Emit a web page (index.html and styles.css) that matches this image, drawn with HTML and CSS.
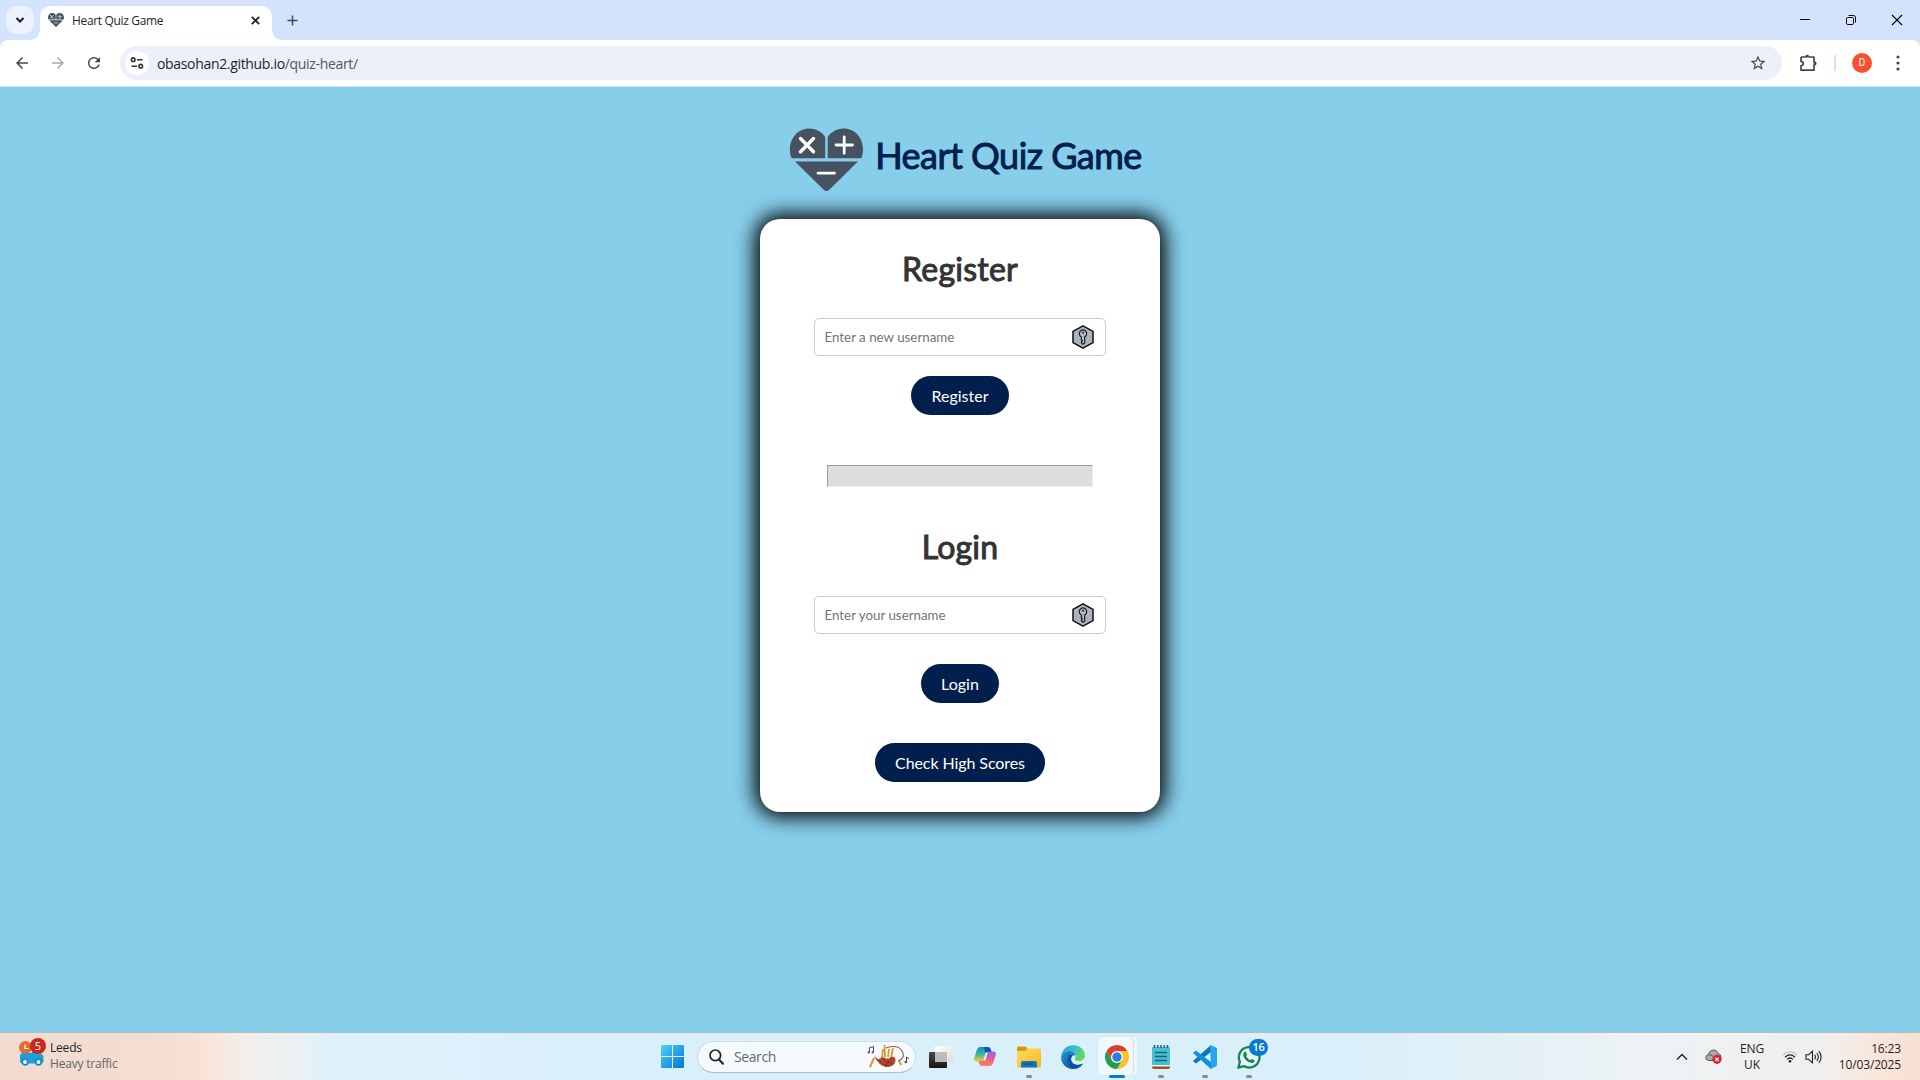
FILE: index.html
```html
<!DOCTYPE html>
<html lang="en">
<head>
<meta charset="utf-8">
<title>Heart Quiz Game</title>
<link rel="stylesheet" href="styles.css">
</head>
<body>
<svg class="defs" aria-hidden="true">
  <defs>
    <symbol id="heart" viewBox="0 0 73 64">
      <path d="M36 30.2H1.6A18.6 18.6 0 0 1 0 21C0 9.500 8.500.5 19 .5c7 0 12.500 3 16.200 8.500V30.200zM37.700 30.200V9C41.400 3.500 47 .5 54 .5 64.500.5 73 9.500 73 21c0 3.500-.5 6.300-1.600 9.200zM5 33.500h63L39 62a4 4 0 0 1-5 0z" fill="#46525f"/>
      <path d="M10.500 10.500l13 13.200m0-13.200l-13 13.200" stroke="#fff" stroke-width="3.400" stroke-linecap="round"/>
      <path d="M46 17h16.500M54.200 8.800v16.500M28 45.200h16.500" stroke="#fff" stroke-width="2.800" stroke-linecap="round"/>
    </symbol>
    <symbol id="key" viewBox="0 0 22 24">
      <path d="M11 .8l10 5.600v11.200l-10 5.600-10-5.600V6.400z" fill="#adb3bd" stroke="#111" stroke-width="1.500" stroke-linejoin="round"/>
      <path d="M9.300 11.900a3.700 3.700 0 1 1 3.400 0v6l-1.700 1.300-1.500-1.300v-1.400l.9-.8-1.100-1z" fill="#b4bac3" stroke="#111" stroke-width="1.100"/>
      <circle cx="11" cy="7.700" r=".8" fill="none" stroke="#111" stroke-width=".8"/>
    </symbol>
  </defs>
</svg>

<div class="screen">
  <header class="browser">
    <div class="tabstrip">
      <div class="tab-search"><svg width="10" height="6" viewBox="0 0 10 6"><path d="M1.500 1l3.500 3.500L8.500 1" fill="none" stroke="#1f1f1f" stroke-width="2"/></svg></div>
      <div class="tab">
        <svg width="16" height="14"><use href="#heart"/></svg>
        <span class="tab-title">Heart Quiz Game</span>
        <svg width="9" height="9" viewBox="0 0 9 9"><path d="M.8.8l7.400 7.400M8.200.8L.8 8.200" stroke="#1f1f1f" stroke-width="1.700"/></svg>
      </div>
      <svg class="new-tab" width="11" height="11" viewBox="0 0 11 11"><path d="M5.500.5v10M.5 5.500h10" stroke="#474747" stroke-width="1.500"/></svg>
      <div class="window-controls">
        <svg width="12" height="12" viewBox="0 0 12 12"><path d="M1 5.500h10" stroke="#000"/></svg>
        <svg width="12" height="12" viewBox="0 0 12 12" fill="none" stroke="#000"><rect x="1.500" y="3.500" width="7" height="7" rx="1.200"/><path d="M3.500 1.500h5a2 2 0 0 1 2 2v5"/></svg>
        <svg width="12" height="12" viewBox="0 0 12 12"><path d="M1 1l10 10M11 1L1 11" stroke="#000" stroke-width="1.100"/></svg>
      </div>
    </div>
    <div class="toolbar">
      <div class="nav">
        <svg width="18" height="18" viewBox="0 0 24 24"><path d="M20 11H7.830l5.590-5.590L12 4l-8 8 8 8 1.410-1.410L7.830 13H20v-2z" fill="#474747"/></svg>
        <svg width="18" height="18" viewBox="0 0 24 24"><path d="M12 4l-1.410 1.410L16.170 11H4v2h12.170l-5.580 5.590L12 20l8-8z" fill="#a9a9a9"/></svg>
        <svg width="18" height="18" viewBox="0 0 24 24"><path d="M17.650 6.350A7.960 7.960 0 0 0 12 4a8 8 0 1 0 7.730 10h-2.080A6 6 0 1 1 12 6c1.660 0 3.140.69 4.220 1.780L13 11h7V4z" fill="#474747"/></svg>
      </div>
      <div class="omnibox">
        <div class="site-info"><svg width="14" height="14" viewBox="0 0 14 14" fill="none" stroke="#333" stroke-width="1.600"><circle cx="3.200" cy="3.700" r="1.800"/><path d="M7 3.700h5.500M1.500 10.200H7"/><circle cx="10.700" cy="10.200" r="1.800"/></svg></div>
        <span class="url">obasohan2.github.io<span class="path">/quiz-heart/</span></span>
        <svg class="star" width="18" height="18" viewBox="0 0 24 24"><path d="M22 9.240l-7.190-.62L12 2 9.190 8.630 2 9.240l5.460 4.730L5.820 21 12 17.270 18.180 21l-1.630-7.030L22 9.240zM12 15.400l-3.760 2.270 1-4.280-3.320-2.880 4.380-.38L12 6.100l1.710 4.040 4.380.38-3.320 2.880 1 4.280L12 15.400z" fill="#474747"/></svg>
      </div>
      <svg class="extensions" width="18" height="18" viewBox="0 0 18 18"><path d="M2 3h4.500M10 3h5v5m0 3v5.200H2v-4.400q2.300-.3 2.300-2.200T2 7.400V3" fill="none" stroke="#474747" stroke-width="1.700" stroke-linejoin="round"/><path d="M6 3.500q0-2.700 2.200-2.700t2.200 2.700zM14.500 7.300q3 0 3 2.200t-3 2.200z" fill="#474747"/></svg>
      <span class="divider"></span>
      <span class="avatar">D</span>
      <svg class="menu" width="4" height="16" viewBox="0 0 4 16" fill="#474747"><circle cx="2" cy="2" r="1.600"/><circle cx="2" cy="8" r="1.600"/><circle cx="2" cy="14" r="1.600"/></svg>
    </div>
  </header>

  <main class="page">
    <div class="brand">
      <svg width="73" height="64"><use href="#heart"/></svg>
      <h1>Heart Quiz Game</h1>
    </div>
    <section class="card">
      <h2>Register</h2>
      <div class="field"><input type="text" placeholder="Enter a new username"><svg width="22" height="24"><use href="#key"/></svg></div>
      <button class="btn register">Register</button>
      <hr>
      <h2>Login</h2>
      <div class="field"><input type="text" placeholder="Enter your username"><svg width="22" height="24"><use href="#key"/></svg></div>
      <button class="btn login">Login</button>
      <button class="btn scores">Check High Scores</button>
    </section>
  </main>

  <footer class="taskbar">
    <div class="widget">
      <div class="traffic">
        <svg width="27" height="30" viewBox="0 0 27 30">
          <circle cx="6.500" cy="10.500" r="6.500" fill="#ea6a2a"/><path d="M6 7.500v4h3.500" stroke="#fff" stroke-width="1.200" fill="none"/>
          <path d="M1 18q.5-2 3-2h8l2-2h5l3 3q2.500.5 2.500 3v4q0 2-2 2.500H3Q1 26 1 24z" fill="#1f9ed8"/><circle cx="6" cy="25" r="2.800" fill="#fff" stroke="#1589c8" stroke-width="1.800"/><circle cx="19.500" cy="25" r="2.800" fill="#fff" stroke="#1589c8" stroke-width="1.800"/>
        </svg>
        <span class="count">5</span>
      </div>
      <div class="widget-text"><span>Leeds</span><span class="muted">Heavy traffic</span></div>
    </div>

    <div class="apps">
      <div class="app">
        <svg width="23" height="23" viewBox="0 0 23 23"><defs><linearGradient id="win" x1="0" y1="0" x2="1" y2="1" gradientUnits="objectBoundingBox"><stop offset="0" stop-color="#4fd0fb"/><stop offset="1" stop-color="#0573d0"/></linearGradient></defs><path d="M1 0h10v11H0V1zM12 0h10l1 1v10H12zM0 12h11v11H1l-1-1zM12 12h11v10l-1 1H12z" fill="url(#win)"/></svg>
      </div>
      <div class="search">
        <svg width="15" height="16" viewBox="0 0 15 16"><circle cx="6.300" cy="6.300" r="5.300" fill="none" stroke="#222" stroke-width="1.700"/><path d="M10 10.500l4 4.200" stroke="#222" stroke-width="2" stroke-linecap="round"/></svg>
        <span>Search</span>
        <svg class="pipes" width="43" height="25" viewBox="0 0 43 25">
          <g fill="none" stroke="#4b4560" stroke-width="1"><path d="M2.500 8V3.500l4-.8V8"/><path d="M39.500 18v-5l2.500 2"/></g>
          <g fill="#4b4560"><circle cx="1.700" cy="8.300" r="1.100"/><circle cx="5.700" cy="8.300" r="1.100"/><circle cx="38.800" cy="18" r="1.300"/></g>
          <path d="M15 14L16 5M18 13L17.500 1M21 13l1-8M24 14l2-10" stroke="#d99a26" stroke-width="1.800"/>
          <path d="M19 4q12-4 16 3t-4 10" fill="none" stroke="#a45540" stroke-width="1.100"/>
          <path d="M7 12q2 1 4 3.500l5-2.500q5 3 8 0 5-1 4.500 4-1 6-9.500 6Q12 22 7 12z" fill="#b8482c"/>
          <path d="M10 15q5 6 12 7M16 14q2 5 10 5M26 14q-5 3-8 8" stroke="#702817" stroke-width=".8" fill="none"/>
          <path d="M7 14l-4 9M32 17l2 4" stroke="#d99a26" stroke-width="2"/>
        </svg>
      </div>
      <div class="app view">
        <svg width="24" height="22" viewBox="0 0 24 22"><defs><linearGradient id="dk" x2="0" y2="1"><stop stop-color="#4a4a4a"/><stop offset="1" stop-color="#161616"/></linearGradient><linearGradient id="lt" x2="1" y2="1"><stop stop-color="#fff"/><stop offset="1" stop-color="#dcdcdc"/></linearGradient></defs><rect y="6" width="18" height="16" rx="1" fill="url(#dk)"/><rect x="6" width="18" height="16" rx="1" fill="url(#lt)"/><path d="M6 6h12v10H6z" fill="#bcbcbc"/></svg>
      </div>
      <div class="app">
        <svg width="22" height="21" viewBox="0 0 22 21"><defs><linearGradient id="ca" x2="0" y2="1"><stop stop-color="#1689d8"/><stop offset=".45" stop-color="#31b5a5"/><stop offset="1" stop-color="#f7cf2c"/></linearGradient><linearGradient id="cb" x2="0" y2="1"><stop stop-color="#9c62e6"/><stop offset=".5" stop-color="#e75a9d"/><stop offset="1" stop-color="#fb8450"/></linearGradient></defs><path d="M6 1h8q2 0 2.800 2.500L17.500 6H14q-2 0-2.600 2L9.800 13.500Q9.200 15.500 7 15.500H3Q-.5 15.500.2 12L2.800 4Q3.800 1 6 1z" fill="url(#ca)"/><path d="M16 20H8q-2 0-2.800-2.500L4.500 15H8q2 0 2.600-2L12.200 7.500Q12.800 5.500 15 5.500h4q3.500 0 2.800 3.500L19.200 17Q18.200 20 16 20z" fill="url(#cb)"/><path d="M10 1h4q2 0 2.800 2.500l.7 2.300H14q-2 0-2.600 2z" fill="#174fc4"/><path d="M9.700 14.500l2.200-8h1.800l-2.300 8z" fill="#eaf6fb"/></svg>
      </div>
      <div class="app running">
        <svg width="24" height="22" viewBox="0 0 24 22"><defs><linearGradient id="fo" x2="1" y2="1"><stop stop-color="#ffda66"/><stop offset="1" stop-color="#f6b91d"/></linearGradient></defs><path d="M0 1.500Q0 .5 1 .5h7.500L11 3v4H0z" fill="#dc9b0c"/><path d="M0 5h8l3-2.500h12q1 0 1 1V20q0 1.500-1.500 1.500h-21Q0 21.500 0 20z" fill="url(#fo)"/><path d="M4 21.500V17q0-2 2-2h12q2 0 2 2v4.500z" fill="#1575b9"/><path d="M8 18h8" stroke="#0b4d81" stroke-width="1.300"/></svg>
      </div>
      <div class="app">
        <svg width="24" height="24" viewBox="0 0 24 24"><defs><linearGradient id="ea" x2="1" y2=".5"><stop stop-color="#249fdc"/><stop offset=".55" stop-color="#38bfd2"/><stop offset="1" stop-color="#68d957"/></linearGradient><linearGradient id="eb" x2="1" y2="1"><stop stop-color="#1b9adf"/><stop offset="1" stop-color="#0b3c85"/></linearGradient></defs><path d="M.3 11C1 4.500 6 .2 12 .2c7 0 12 4.800 12 10.300 0 3.500-2.800 5.500-6 5.500-3 0-4.500-1-4-2.300C16 10.500 13 6 8.500 6 4.500 6 1 8.500.3 11z" fill="url(#ea)"/><path d="M.2 13C0 8.500 4 6 8.500 6c3 0 5.500 2 6 4.500-1.500-1-4.500 0-4.500 3.500 0 4.500 5.500 8 12 4.500-2 3.500-6 5.400-10 5.400C5 23.900.2 18.500.2 13z" fill="url(#eb)"/><path d="M8 10c-3 5-.5 12 5.500 13.800C18 23.500 21 20.500 22 18.500c-6.500 3.500-12 0-12-4.500 0-1.500.8-3 2-3.600z" fill="#0e4f9f"/></svg>
      </div>
      <div class="app active">
        <svg width="24" height="24" viewBox="0 0 24 24"><path d="M12 6h10.390A12 12 0 0 1 12 24l5.200-9z" fill="#fcc51d"/><path d="M6.800 15L1.610 6A12 12 0 0 0 12 24l5.200-9z" fill="#25a04a"/><path d="M1.610 6A12 12 0 0 1 22.390 6H12L6.800 15z" fill="#df3b2f"/><circle cx="12" cy="12" r="6" fill="#fff"/><circle cx="12" cy="12" r="4.700" fill="#2f78ec"/></svg>
      </div>
      <div class="app running">
        <svg width="18" height="24" viewBox="0 0 18 24"><rect y="2" width="18" height="19" rx="1" fill="#48bdd6"/><path d="M2.500 0v3M5.800 0v3M9 0v3M12.300 0v3M15.500 0v3" stroke="#176679" stroke-width="1.500"/><path d="M3 7.500h12M3 11.500h12M3 15.500h12" stroke="#146477" stroke-width="1.500"/><path d="M0 20.500h18V22q0 2-2 2H2q-2 0-2-2z" fill="#9b4f22"/><path d="M0 20h18v1.500H0z" fill="#f0f0f0"/></svg>
      </div>
      <div class="app running">
        <svg width="24" height="24" viewBox="0 0 24 24"><path d="M18 0v7L3 18.500 0 16z" fill="#0878bd"/><path d="M0 8l3-2.500L18 17v7z" fill="#1490d7"/><path d="M17 .2q.6-.4 1.300 0L23 2.500q1 .5 1 1.500v16q0 1-1 1.500l-4.700 2.300q-1 .4-1.800-.4L18 22z" fill="#2aa4f1"/></svg>
      </div>
      <div class="app running">
        <svg width="24" height="24" viewBox="0 0 24 24" fill="none"><path d="M1.300 22.700l1.600-5.900a10.300 10.300 0 1 1 3.900 4.300z" stroke="#178553" stroke-width="2.300" fill="#e7f6f4" stroke-linejoin="round"/><path d="M8.600 6.500l1.500 3-1 1.500q1.500 3 4.200 4.200l1.500-1.300 2.800 1.400q0 2.700-2.800 2.700-3 0-6-3t-2.600-5.800q.4-2.500 2.400-2.700z" fill="#178553"/></svg>
        <span class="badge">16</span>
      </div>
    </div>

    <div class="tray">
      <svg class="chevron" width="12" height="8" viewBox="0 0 12 8"><path d="M1 6.500l5-5 5 5" fill="none" stroke="#222" stroke-width="1.400"/></svg>
      <svg class="cloud" width="17" height="15" viewBox="0 0 17 15"><path d="M3.500 11.500Q.5 11 .7 8.300 1 6 3.500 5.700 4.500 1 8.700 1q3.300 0 4.300 3.500 2.800.5 3 3.500 0 3.500-3 3.500z" fill="#aaa" stroke="#555"/><path d="M4 6q4-1 6 5" stroke="#555" fill="none"/><circle cx="12" cy="10.300" r="4.600" fill="#e3202c"/><path d="M10.300 8.600l3.400 3.400m0-3.400L10.300 12" stroke="#fff" stroke-width="1.200"/></svg>
      <div class="lang"><span>ENG</span><span>UK</span></div>
      <svg class="wifi" width="16" height="12" viewBox="0 0 16 12" fill="none"><path d="M1 4Q8-2.500 15 4" stroke="#bbb" stroke-width="1.100"/><path d="M3 6.200q5-4.500 10 0M5 8.400q3-2.800 6 0" stroke="#222" stroke-width="1.200"/><circle cx="8" cy="10.300" r="1.300" fill="#222"/></svg>
      <svg class="volume" width="17" height="14" viewBox="0 0 17 14" fill="none" stroke="#222" stroke-width="1.100"><path d="M1 4.700h2.700L7.500 1.200v11.600L3.700 9.300H1z"/><path d="M9.700 4.800q1.500 2.200 0 4.400M11.800 3q3 4 0 8M13.900 1.200q4.400 5.800 0 11.600"/></svg>
      <div class="clock"><span>16:23</span><span>10/03/2025</span></div>
    </div>
  </footer>
</div>
</body>
</html>
```
FILE: styles.css
```css
* { box-sizing: border-box; }
body { margin: 0; overflow: hidden; font-family: "Open Sans", sans-serif; font-size: 12px; color: #1f1f1f; }
svg { display: block; flex: none; }
.defs { width: 0; height: 0; position: absolute; }
.screen { width: 1920px; height: 1080px; display: flex; flex-direction: column; }

/* Browser frame */
.browser { height: 87px; background: #d3e3fd; flex: none; }
.tabstrip { height: 40px; display: flex; align-items: flex-start; padding-left: 6px; }
.tab-search { width: 28px; height: 28px; margin: 6px 6px 0 0; border-radius: 10px; background: #ebf1fd; display: flex; align-items: center; justify-content: center; }
.tab { position: relative; width: 232px; height: 34px; margin-top: 6px; padding: 0 12px 6px 8px; background: #fff; border-radius: 10px 10px 0 0; display: flex; align-items: center; }
.tab::before, .tab::after { content: ""; position: absolute; bottom: 0; width: 10px; height: 10px; }
.tab::before { left: -10px; background: radial-gradient(circle at 0 0, transparent 9.500px, #fff 10px); }
.tab::after { right: -10px; background: radial-gradient(circle at 100% 0, transparent 9.500px, #fff 10px); }
.tab-title { margin-left: 8px; flex: 1; letter-spacing: -0.34px; white-space: nowrap; }
.new-tab { margin: 15px 0 0 14.500px; }
.window-controls { margin: 14px 17px 0 auto; display: flex; gap: 34px; }
.toolbar { height: 47px; background: #fff; border-radius: 8px 8px 0 0; border-bottom: 1px solid #dcdfe4; display: flex; align-items: center; padding-left: 13px; }
.nav { display: flex; gap: 18px; width: 107px; }
.omnibox { width: 1662px; height: 34px; border-radius: 17px; background: #ecf0fa; display: flex; align-items: center; padding: 0 15px 0 5px; }
.site-info { width: 24px; height: 24px; border-radius: 50%; background: #fff; display: flex; align-items: center; justify-content: center; }
.url { margin-left: 8px; flex: 1; font-size: 14px; letter-spacing: -0.33px; }
.path { color: #565656; }
.extensions { margin-left: 17px; }
.divider { width: 2px; height: 16px; margin-left: 17px; background: #d3e3fd; }
.avatar { width: 20px; height: 20px; margin-left: 16px; border-radius: 50%; background: #f4522d; color: #fff; font: 10px/20px Roboto, sans-serif; text-align: center; }
.menu { margin-left: 24px; }

/* Quiz page */
.page { height: 945px; background: #87ceeb; font-family: Lato, sans-serif; display: flex; flex-direction: column; align-items: center; }
.brand { display: flex; align-items: center; gap: 12px; height: 64px; margin: 41px 0 27px 12px; }
h1 { margin: -10px 0 0; font-size: 36px; font-weight: 400; line-height: 44px; letter-spacing: -0.53px; color: #001f4d; -webkit-text-stroke: 1px #001f4d; white-space: nowrap; }
.card { width: 400px; height: 593px; padding: 30px 54px; border-radius: 20px; background: #fff; box-shadow: 0 0 20px 5px #000; display: flex; flex-direction: column; align-items: center; }
h2 { margin: 0; height: 40px; font-size: 32px; font-weight: 400; line-height: 40px; letter-spacing: 0.22px; color: #333; -webkit-text-stroke: 1px #333; }
.field { width: 292px; height: 38px; margin-top: 29px; border: 1px solid #ccc; border-radius: 5px; display: flex; align-items: center; padding: 0 11px 0 9.500px; flex: none; }
.field input { flex: 1; min-width: 0; padding: 0; border: 0; outline: 0; background: none; font: 13.333px Lato, sans-serif; }
.field input::placeholder { color: #757575; }
.btn { height: 39px; padding: 0 20px; border: 0; border-radius: 20px; background: #001f4d; color: #fff; font: 16px Lato, sans-serif; flex: none; white-space: nowrap; }
.register { margin-top: 20px; width: 98px; }
.login { margin-top: 30px; width: 78px; }
.scores { margin-top: 40px; width: 170px; letter-spacing: -0.08px; }
hr { width: 266px; height: 22px; margin: 50px 0 40px; border: 1px solid; border-color: #9a9a9a #eee #eee #9a9a9a; background: #ddd; flex: none; }

/* Taskbar */
.taskbar { height: 48px; border-top: 1px solid #b5bcc0; display: grid; grid-template-columns: 650px 621px 1fr; align-items: center; background: linear-gradient(90deg, #f1dbd0 0, #f4ddd1 160px, #f9e3d8 205px, #f2efec 245px, #edf1f2 290px, #def2fb 330px, #d9eff9 600px, #d9eff9 1350px, #edf2f5 1640px, #f1efed 1830px, #f9e5d9 1880px, #f7e0d2 1920px); }
.widget { display: flex; padding-left: 19px; height: 47px; }
.traffic { position: relative; width: 31px; padding-top: 5px; }
.traffic svg { margin-top: -1px; }
.count { position: absolute; left: 11px; top: 5px; width: 16px; height: 16px; border-radius: 50%; background: #c42b1c; color: #fff; font-size: 11px; line-height: 16px; text-align: center; }
.widget-text { display: flex; flex-direction: column; padding-top: 7px; line-height: 16px; letter-spacing: -0.2px; }
.muted { color: #666; }
.apps { display: flex; align-items: center; height: 47px; }
.app { position: relative; width: 44px; height: 47px; display: flex; align-items: center; justify-content: center; flex: none; }
.app.view { margin-left: 3px; }
.search { width: 219px; height: 32px; margin-left: 3px; border: 1px solid #c7dce6; border-bottom-color: #a9bfca; border-radius: 16px; background: #f4fafd; display: flex; align-items: center; padding: 0 5px 0 11px; font-size: 14px; color: #626a6e; flex: none; }
.search span { margin-left: 10px; letter-spacing: -0.4px; }
.pipes { margin-left: auto; }
.running::after, .active::after { content: ""; position: absolute; bottom: 2px; left: 19px; width: 6px; height: 3px; border-radius: 2px; background: #858d91; }
.active::before { content: ""; position: absolute; left: 3px; top: 4px; width: 35px; height: 38px; border-radius: 4px; background: #f0f8fc; box-shadow: 1px 0 0 #d0e2ea, 4px 0 0 #edf6fa, 0 0 1px #bdd0da; }
.active svg { position: relative; }
.active::after { left: 14px; width: 16px; background: #0878d4; }
.badge { position: absolute; left: 22px; top: 6px; width: 19px; height: 17px; border-radius: 9px; background: #0878d4; color: #fff; font-size: 11px; font-weight: 600; letter-spacing: -0.4px; line-height: 16px; text-align: center; }
.tray { display: flex; align-items: center; padding-right: 19px; height: 47px; }
.chevron { margin-left: 405px; }
.cloud { margin-left: 17px; }
.lang, .clock { display: flex; flex-direction: column; line-height: 16px; }
.lang { width: 40px; margin-left: 10px; align-items: center; letter-spacing: -0.1px; }
.wifi { margin-left: 10px; }
.volume { margin-left: 7px; }
.clock { margin-left: auto; text-align: right; letter-spacing: -0.15px; }
```
